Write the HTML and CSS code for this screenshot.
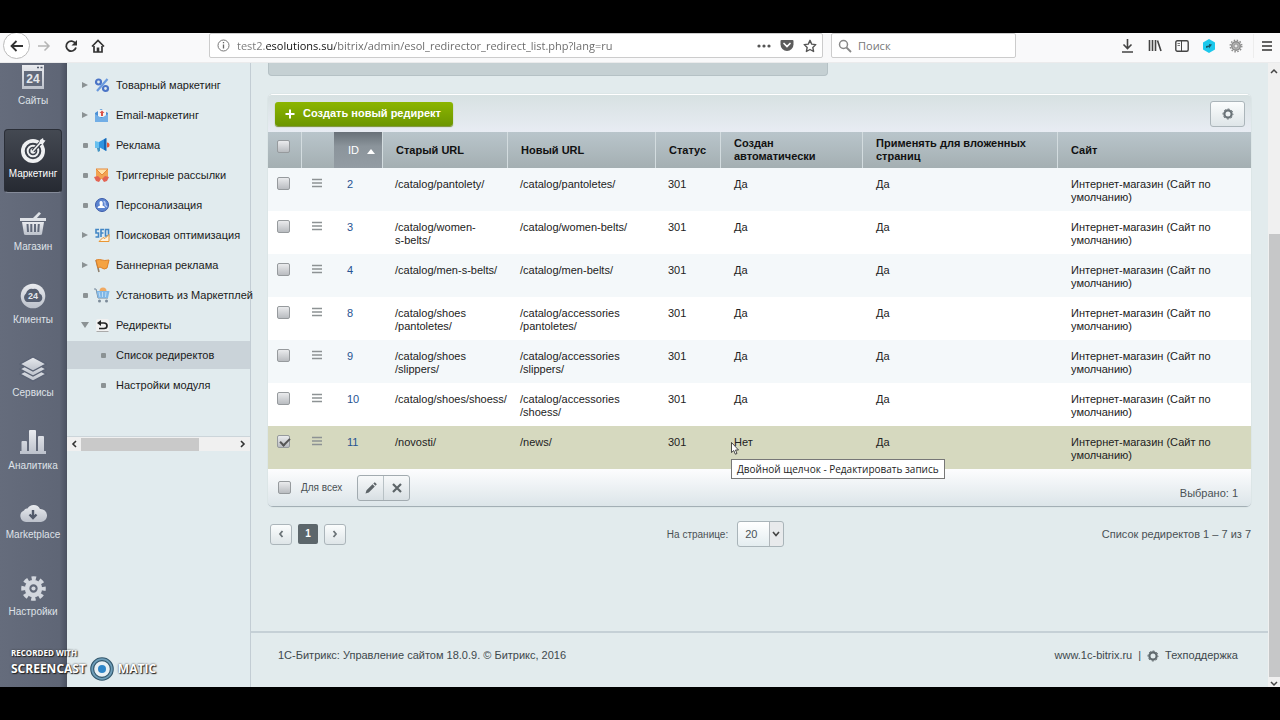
FILE: index.html
```html
<!DOCTYPE html>
<html lang="ru">
<head>
<meta charset="utf-8">
<title>Список редиректов</title>
<link rel="stylesheet" href="styles.css">
</head>
<body>
<svg class="defs" aria-hidden="true">
  <defs>
    <linearGradient id="metal" x1="0" y1="0" x2="0" y2="1"><stop offset="0" stop-color="#e9ebef"/><stop offset="1" stop-color="#bcc1cb"/></linearGradient>
    <symbol id="gear" viewBox="0 0 24 24"><circle cx="12" cy="12" r="6.2" fill="none" stroke="currentColor" stroke-width="4.4"/><circle cx="12" cy="12" r="9.8" fill="none" stroke="currentColor" stroke-width="4" stroke-dasharray="4.2 3.497" stroke-dashoffset="2.1"/><circle cx="12" cy="12" r="2" fill="currentColor"/></symbol>
    <symbol id="ring" viewBox="0 0 12 12"><circle cx="6" cy="6" r="3.6" fill="none" stroke="currentColor" stroke-width="2.2"/><circle cx="6" cy="6" r="5" fill="none" stroke="currentColor" stroke-width="1" stroke-dasharray="2 1.927" stroke-dashoffset="1"/></symbol>
    <symbol id="cog" viewBox="0 0 14 14"><circle cx="7" cy="7" r="4.300" fill="#b4b4b4" stroke="#8b8b8b" stroke-width="1.400"/><circle cx="7" cy="7" r="5.800" fill="none" stroke="#8b8b8b" stroke-width="1.400" stroke-dasharray="1.500 1.537"/><circle cx="7" cy="7" r="2" fill="#e8e8e8" stroke="#888" stroke-width=".8"/></symbol>
    <symbol id="bars" viewBox="0 0 12 10"><path d="M1 1.500h10M1 5h10M1 8.500h10" stroke="currentColor" stroke-width="1.300"/></symbol>
  </defs>
</svg>

<header class="browser">
  <button class="nav-back" aria-label="Назад"><svg width="16" height="14" viewBox="0 0 16 14"><path d="M14 7H3M7.500 2L2.500 7l5 5" fill="none" stroke="#333" stroke-width="1.800"/></svg></button>
  <button class="tool" aria-label="Вперёд"><svg width="14" height="12" viewBox="0 0 14 12"><path d="M1 6h11M7.500 1.500L12 6l-4.500 4.500" fill="none" stroke="#b5b5b5" stroke-width="1.500"/></svg></button>
  <button class="tool" aria-label="Обновить"><svg width="14" height="14" viewBox="0 0 14 14"><path d="M11.500 4.500A5 5 0 1 0 12 8.500" fill="none" stroke="#333" stroke-width="1.800"/><path d="M13 1v5.500H7.500z" fill="#333"/></svg></button>
  <button class="tool" aria-label="Домой"><svg width="14" height="14" viewBox="0 0 14 14"><path d="M1 7.500L7 1.500l6 6" fill="none" stroke="#333" stroke-width="1.700"/><path d="M3 7v6h8V7" fill="none" stroke="#333" stroke-width="1.700"/><path d="M5.700 8.500h2.600V13H5.700z" fill="#333"/></svg></button>
  <div class="url">
    <svg width="13" height="13" viewBox="0 0 13 13"><circle cx="6.500" cy="6.500" r="5.500" fill="none" stroke="#777"/><path d="M6.500 5.500v4M6.500 3v1.300" stroke="#666" stroke-width="1.300"/></svg>
    <input class="url-input" type="text" aria-label="Адрес" value="test2.esolutions.su/bitrix/admin/esol_redirector_redirect_list.php?lang=ru">
    <svg width="14" height="14" viewBox="0 0 14 14" fill="#555"><circle cx="2" cy="7" r="1.600"/><circle cx="7" cy="7" r="1.600"/><circle cx="12" cy="7" r="1.600"/></svg>
    <svg width="14" height="13" viewBox="0 0 14 13"><path d="M1.500 1h11q1 0 1 1v3.500a6.500 6.500 0 0 1-13 0V2q0-1 1-1z" fill="#5c5c5c"/><path d="M4 4.500l3 3 3-3" fill="none" stroke="#fff" stroke-width="1.700" stroke-linecap="round"/></svg>
    <svg width="14" height="14" viewBox="0 0 14 14"><path d="M7 1.300l1.700 3.800 4.100.5-3 2.800.8 4.100L7 10.500l-3.600 2 .8-4.100-3-2.800 4.100-.5z" fill="none" stroke="#555" stroke-width="1.400" stroke-linejoin="round"/></svg>
  </div>
  <div class="search">
    <svg width="14" height="14" viewBox="0 0 14 14"><circle cx="5.500" cy="5.500" r="4" fill="none" stroke="#888" stroke-width="1.500"/><path d="M8.500 8.500L13 13" stroke="#888" stroke-width="1.800"/></svg>
    <input type="text" aria-label="Поиск" placeholder="Поиск">
  </div>
  <div class="browser-tools">
    <button class="tool" aria-label="Загрузки"><svg width="13" height="14" viewBox="0 0 13 14"><path d="M6.500 0v9M2.500 5.500l4 4 4-4M1 13h11" fill="none" stroke="#444" stroke-width="1.600"/></svg></button>
    <button class="tool" aria-label="Библиотека"><svg width="14" height="13" viewBox="0 0 14 13"><path d="M1.500 1v11M4.500 1v11M7.500 1v11M9.500 1.500L13 12" fill="none" stroke="#444" stroke-width="1.600"/></svg></button>
    <button class="tool" aria-label="Боковая панель"><svg width="14" height="12" viewBox="0 0 14 12"><rect x=".8" y=".8" width="12.400" height="10.400" rx="1.500" fill="none" stroke="#444" stroke-width="1.400"/><path d="M6.500 1v10" stroke="#444"/><path d="M2.500 3.500h2.500M2.500 5.500h2.500" stroke="#777"/></svg></button>
    <button class="tool" aria-label="Дополнение"><svg width="14" height="14" viewBox="0 0 14 14"><path d="M7 0l6 3.500v7L7 14l-6-3.500v-7z" fill="#1cc8ec"/><path d="M4 9V7l3-.5V5l3 .5-3 4V8z" fill="#175768"/></svg></button>
    <button class="tool" aria-label="Расширение"><svg width="14" height="14"><use href="#cog"/></svg></button>
    <button class="tool tool-menu" aria-label="Меню"><svg width="12" height="12" viewBox="0 0 12 12"><path d="M1 2h10M1 6h10M1 10h10" stroke="#333" stroke-width="1.500"/></svg></button>
  </div>
</header>

<div class="workspace">
  <nav class="rail">
    <a class="rail-item" href="#"><span class="rail-icon"><svg width="26" height="26" viewBox="0 0 26 26"><path d="M2 1h22v24H2z" fill="url(#metal)"/><path d="M4 7h18v15H4z" fill="#626a7b"/><path d="M17 3.500h2M20.500 3.500h2" stroke="#525a6b" stroke-width="1.500"/><text x="13" y="19" class="icon-24" text-anchor="middle">24</text></svg></span>Сайты</a>
    <a class="rail-item is-active" href="#"><span class="rail-icon"><svg width="28" height="28" viewBox="0 0 28 28"><circle cx="14" cy="15" r="12" fill="#eff0f2"/><circle cx="14" cy="15" r="7.300" fill="none" stroke="#3c414b" stroke-width="2"/><circle cx="14" cy="15" r="3.500" fill="none" stroke="#3c414b" stroke-width="1.700"/><path d="M14 15L25 3" stroke="#3c414b" stroke-width="4"/><path d="M14 15L22 6" stroke="#eff0f2" stroke-width="1.700"/><path d="M20 8l1-4 3-2 .5 2 2 .5-2.500 3.500z" fill="#eff0f2"/></svg></span>Маркетинг</a>
    <a class="rail-item" href="#"><span class="rail-icon"><svg width="28" height="26" viewBox="0 0 28 26"><path d="M13 9l7-7 2 1.500L17 9z" fill="#dfe2e7"/><path d="M1 8h26v3H1z" fill="#dfe2e7"/><path d="M3 12h22l-2 12q0 1-2 1H7q-2 0-2-1z" fill="url(#metal)"/><path d="M8.500 14l.5 8M12.300 14v8M16 14v8M19.800 14l-.5 8" stroke="#626a7b" stroke-width="2"/></svg></span>Магазин</a>
    <a class="rail-item" href="#"><span class="rail-icon"><svg width="26" height="26" viewBox="0 0 26 26"><circle cx="13" cy="13" r="12.300" fill="url(#metal)"/><path d="M7 19a5 5 0 0 1-1-8.500Q8 5 13 6q5-1 6.500 4.500A4.500 4.500 0 0 1 19 19z" fill="#555e70"/><text x="13" y="16" class="icon-24 icon-24-small" text-anchor="middle">24</text></svg></span>Клиенты</a>
    <a class="rail-item" href="#"><span class="rail-icon"><svg width="28" height="26" viewBox="0 0 28 26"><g fill="url(#metal)" stroke="#596173" stroke-width="1.300"><path d="M1 18l13-7 13 7-13 7z"/><path d="M1 13l13-7 13 7-13 7z"/><path d="M1 8l13-7 13 7-13 7z"/></g></svg></span>Сервисы</a>
    <a class="rail-item" href="#"><span class="rail-icon"><svg width="28" height="28" viewBox="0 0 28 28"><path d="M1 26V23h1.500V14q0-1 1-1H7q1 0 1 1v9h2V3q0-1 1-1h5q1 0 1 1v20h2V9q0-1 1-1h4q1 0 1 1v14h2v3z" fill="url(#metal)"/></svg></span>Аналитика</a>
    <a class="rail-item is-compact" href="#"><span class="rail-icon"><svg width="28" height="20" viewBox="0 0 28 20"><path d="M7 19A6 6 0 0 1 5 7.500Q6 5 8.500 5.500A7 7 0 0 1 21 6a6.500 6.500 0 0 1 1 13z" fill="url(#metal)"/><path d="M14 7v7M10.500 11.500L14 15l3.500-3.500" fill="none" stroke="#525a6b" stroke-width="2.400"/></svg></span>Marketplace</a>
    <a class="rail-item" href="#"><span class="rail-icon"><svg width="25" height="25"><use href="#gear"/></svg></span>Настройки</a>
  </nav>

  <aside class="menu">
    <ul class="menu-list">
      <li><a class="menu-item" href="#"><i class="arrow"></i><svg width="16" height="16" viewBox="0 0 16 16"><g fill="none" stroke="#4b74c6" stroke-width="2.200"><circle cx="4.500" cy="5" r="2.500"/><circle cx="11.500" cy="11.500" r="2.500"/><path d="M13.500 2L3 14" stroke="#6b9ade"/></g></svg>Товарный маркетинг</a></li>
      <li><a class="menu-item" href="#"><i class="arrow"></i><svg width="16" height="16" viewBox="0 0 16 16"><path d="M1 6l6-4 7 4v9H1z" fill="#4b8fd4"/><path d="M4 3h8v7H4z" fill="#f4f2f2"/><path d="M8 3.500L5.500 6H7v3h2V6h1.500z" fill="#d9534a"/><path d="M1 7l6.500 4L14 7v8H1z" fill="#72aee6"/></svg>Email-маркетинг</a></li>
      <li><a class="menu-item" href="#"><i class="dot"></i><svg width="16" height="16" viewBox="0 0 16 16"><path d="M2 8h4v6l-2 1z" fill="#4796c4"/><path d="M1 4l4 1v6H1z" fill="#68c0ee"/><path d="M5 5l7-4v13l-7-4z" fill="#2f92e0"/><path d="M10 2.500l2.500-1.500v13L10 12.500z" fill="#1766b4"/><path d="M13 5.500a2.500 2.500 0 0 1 0 5z" fill="#ec5836"/></svg>Реклама</a></li>
      <li><a class="menu-item" href="#"><i class="dot"></i><svg width="16" height="16" viewBox="0 0 16 16"><path d="M2 2h12v10H2z" fill="#f2a452"/><path d="M2 2l6 6 6-6z" fill="#ffe2aa" stroke="#e5883b"/><path d="M0 10l4-1 3 3-2 3-3-1zM15 10l-4-1-3 3 2 3 3-1z" fill="#e36454"/></svg>Триггерные рассылки</a></li>
      <li><a class="menu-item" href="#"><i class="dot"></i><svg width="16" height="16" viewBox="0 0 16 16"><circle cx="8" cy="8" r="6.500" fill="#5b84d0" stroke="#3b5baa"/><path d="M3.500 11q0-2 2.500-2.500Q4.500 4 7 4t1.500 4.500q2.500.5 2.500 2.500z" fill="#fff"/><path d="M9.500 4.500q2 0 1.500 3.500l2 2" fill="none" stroke="#b5c8f2" stroke-width="1.300"/></svg>Персонализация</a></li>
      <li><a class="menu-item" href="#"><i class="arrow"></i><svg width="16" height="16" viewBox="0 0 16 16"><path d="M5 2.500H2v3.500h2.500v4H1.500M10 2.500H7v7.500M7 6h2.500M11.500 2.500h3V9h-3z" fill="none" stroke="#4387c5" stroke-width="1.600"/><path d="M5 14.500l4-4 2 1 4-4v7z" fill="#fff2dc" stroke="#e99634"/></svg>Поисковая оптимизация</a></li>
      <li><a class="menu-item" href="#"><i class="arrow"></i><svg width="16" height="16" viewBox="0 0 16 16"><path d="M2 3l3 12" stroke="#8d7e6c" stroke-width="1.500"/><path d="M2 3q4-1 6 0t7 0l-2 8q-3 2-5 0t-4 0z" fill="#f5a343" stroke="#df8127"/></svg>Баннерная реклама</a></li>
      <li><a class="menu-item" href="#"><i class="dot"></i><svg width="16" height="16" viewBox="0 0 16 16"><circle cx="9" cy="4" r="3.500" fill="#f0a961"/><path d="M0 2h2l2 9h10" fill="none" stroke="#75879a"/><path d="M2.500 4h13L14 11H4z" fill="#80b7e6"/><path d="M5 5l1 5M8.500 5v5M12 5l-.5 5" stroke="#bedcf5"/><circle cx="5.500" cy="14" r="1.500" fill="#7c8b99"/><circle cx="12.500" cy="14" r="1.500" fill="#7c8b99"/></svg>Установить из Маркетплей</a></li>
      <li><a class="menu-item" href="#"><i class="arrow is-open"></i><svg width="16" height="16" viewBox="0 0 16 16"><rect x="2" y="2" width="13" height="13" rx="2" fill="#f1f1f1"/><path d="M2.500 14.500h12" stroke="#aaa"/><path d="M5 6h5q3 0 3 2.700T10 11.500H5" fill="none" stroke="#222" stroke-width="1.700"/><path d="M7 3v6L3 6z" fill="#222"/></svg>Редиректы</a></li>
      <li><a class="menu-item is-child is-selected" href="#"><i class="dot"></i>Список редиректов</a></li>
      <li><a class="menu-item is-child" href="#"><i class="dot"></i>Настройки модуля</a></li>
    </ul>
    <div class="hscroll">
      <svg width="6" height="8" viewBox="0 0 6 8"><path d="M5 1L2 4l3 3" fill="none" stroke="#333" stroke-width="1.600"/></svg>
      <div class="hscroll-track"><div class="hscroll-thumb"></div></div>
      <svg width="6" height="8" viewBox="0 0 6 8"><path d="M1 1l3 3-3 3" fill="none" stroke="#333" stroke-width="1.600"/></svg>
    </div>
  </aside>

  <div class="page">
    <main class="content">
      <div class="filter-edge"></div>
      <section class="grid-panel">
        <div class="grid-toolbar">
          <button class="create"><svg width="10" height="10" viewBox="0 0 10 10"><path d="M5 .5v9M.5 5h9" stroke="#fff" stroke-width="2"/></svg>Создать новый редирект</button>
          <button class="btn settings" aria-label="Настроить"><svg width="12" height="12"><use href="#ring"/></svg></button>
        </div>
        <table class="grid">
          <colgroup><col class="c-check"><col class="c-check"><col class="c-id"><col class="c-old"><col class="c-new"><col class="c-status"><col class="c-auto"><col class="c-nested"><col></colgroup>
          <thead>
            <tr><th><input type="checkbox" aria-label="Выбрать все"></th><th></th><th class="sorted">ID <i class="sort-up"></i></th><th>Старый URL</th><th>Новый URL</th><th>Статус</th><th>Создан автоматически</th><th>Применять для вложенных страниц</th><th>Сайт</th></tr>
          </thead>
          <tbody>
            <tr><td><input type="checkbox" aria-label="Выбрать 2"></td><td><button class="row-menu" aria-label="Действия"><svg width="12" height="10"><use href="#bars"/></svg></button></td><td><a href="#">2</a></td><td>/catalog/pantolety/</td><td>/catalog/pantoletes/</td><td>301</td><td>Да</td><td>Да</td><td>Интернет-магазин (Сайт по умолчанию)</td></tr>
            <tr><td><input type="checkbox" aria-label="Выбрать 3"></td><td><button class="row-menu" aria-label="Действия"><svg width="12" height="10"><use href="#bars"/></svg></button></td><td><a href="#">3</a></td><td>/catalog/women-<br>s-belts/</td><td>/catalog/women-belts/</td><td>301</td><td>Да</td><td>Да</td><td>Интернет-магазин (Сайт по умолчанию)</td></tr>
            <tr><td><input type="checkbox" aria-label="Выбрать 4"></td><td><button class="row-menu" aria-label="Действия"><svg width="12" height="10"><use href="#bars"/></svg></button></td><td><a href="#">4</a></td><td>/catalog/men-s-belts/</td><td>/catalog/men-belts/</td><td>301</td><td>Да</td><td>Да</td><td>Интернет-магазин (Сайт по умолчанию)</td></tr>
            <tr><td><input type="checkbox" aria-label="Выбрать 8"></td><td><button class="row-menu" aria-label="Действия"><svg width="12" height="10"><use href="#bars"/></svg></button></td><td><a href="#">8</a></td><td>/catalog/shoes<br>/pantoletes/</td><td>/catalog/accessories<br>/pantoletes/</td><td>301</td><td>Да</td><td>Да</td><td>Интернет-магазин (Сайт по умолчанию)</td></tr>
            <tr><td><input type="checkbox" aria-label="Выбрать 9"></td><td><button class="row-menu" aria-label="Действия"><svg width="12" height="10"><use href="#bars"/></svg></button></td><td><a href="#">9</a></td><td>/catalog/shoes<br>/slippers/</td><td>/catalog/accessories<br>/slippers/</td><td>301</td><td>Да</td><td>Да</td><td>Интернет-магазин (Сайт по умолчанию)</td></tr>
            <tr><td><input type="checkbox" aria-label="Выбрать 10"></td><td><button class="row-menu" aria-label="Действия"><svg width="12" height="10"><use href="#bars"/></svg></button></td><td><a href="#">10</a></td><td class="nowrap">/catalog/shoes/shoess/</td><td>/catalog/accessories<br>/shoess/</td><td>301</td><td>Да</td><td>Да</td><td>Интернет-магазин (Сайт по умолчанию)</td></tr>
            <tr class="is-checked"><td><input type="checkbox" aria-label="Выбрать 11" checked></td><td><button class="row-menu" aria-label="Действия"><svg width="12" height="10"><use href="#bars"/></svg></button></td><td><a href="#">11</a></td><td>/novosti/</td><td>/news/</td><td>301</td><td class="hovered">Нет<svg class="cursor" width="8" height="13" viewBox="0 0 8 13"><path d="M.5.500v10l2.300-2 1.500 3.700 1.700-.7-1.500-3.500h3z" fill="#fff" stroke="#222" stroke-width=".8"/></svg><span class="tooltip" role="tooltip">Двойной щелчок - Редактировать запись</span></td><td>Да</td><td>Интернет-магазин (Сайт по умолчанию)</td></tr>
          </tbody>
        </table>
        <div class="grid-footer">
          <label class="for-all"><input type="checkbox">Для всех</label>
          <div class="actions">
            <button aria-label="Редактировать"><svg width="14" height="14" viewBox="0 0 14 14"><path d="M1.500 12.500l1-3.300 6-6 2.300 2.300-6 6zM9.300 2.500l1.500-1.300 2 2-1.300 1.500z" fill="#5d6468"/></svg></button>
            <button aria-label="Удалить"><svg width="12" height="12" viewBox="0 0 12 12"><path d="M2 2l8 8M10 2l-8 8" stroke="#5d6468" stroke-width="2.200"/></svg></button>
          </div>
          <span class="selected-count">Выбрано: 1</span>
        </div>
      </section>
      <div class="pager">
        <div class="pages">
          <button class="btn" aria-label="Предыдущая"><svg width="6" height="8" viewBox="0 0 6 8"><path d="M4.500 1L2 4l2.500 3" fill="none" stroke="#6b7377" stroke-width="1.800"/></svg></button>
          <span class="current">1</span>
          <button class="btn" aria-label="Следующая"><svg width="6" height="8" viewBox="0 0 6 8"><path d="M1.500 1L4 4 1.500 7" fill="none" stroke="#6b7377" stroke-width="1.800"/></svg></button>
        </div>
        <div class="per-page">
          <label for="per-page">На странице:</label>
          <span class="select-box"><select id="per-page"><option>20</option></select><svg width="8" height="6" viewBox="0 0 8 6"><path d="M1 1l3 3.500L7 1" fill="none" stroke="#444" stroke-width="1.600"/></svg></span>
        </div>
        <span class="range">Список редиректов 1 – 7 из 7</span>
      </div>
    </main>
    <footer class="footer">
      <span>1С-Битрикс: Управление сайтом 18.0.9. © Битрикс, 2016</span>
      <span class="footer-links"><a href="#">www.1c-bitrix.ru</a><span>|</span><svg width="12" height="12"><use href="#ring"/></svg><a href="#">Техподдержка</a></span>
    </footer>
  </div>

  <div class="vscroll">
    <svg width="8" height="6" viewBox="0 0 8 6"><path d="M1 5l3-3 3 3" fill="none" stroke="#444" stroke-width="1.500"/></svg>
    <div class="vscroll-track"><div class="vscroll-thumb"></div></div>
    <svg width="8" height="6" viewBox="0 0 8 6"><path d="M1 1l3 3 3-3" fill="none" stroke="#444" stroke-width="1.500"/></svg>
  </div>

  <div class="watermark">
    <span class="wm-top">RECORDED WITH</span>
    <span class="wm-name">SCREENCAST<svg width="24" height="24" viewBox="0 0 24 24"><circle cx="12" cy="12" r="9.800" fill="#e8f0f4" stroke="#31566b" stroke-width="4"/><circle cx="12" cy="12" r="9.800" fill="none" stroke="#6e9db8" stroke-width="1.800"/><circle cx="12" cy="12" r="4" fill="#2f86c8"/></svg>MATIC</span>
  </div>
</div>
</body>
</html>
```
FILE: styles.css
```css
* { box-sizing: border-box; }

body {
  margin: 0;
  min-height: 100vh;
  padding: 33px 0;
  display: flex;
  flex-direction: column;
  background: #000;
  font: 11px/13px "Liberation Sans", Arial, sans-serif;
  color: #222;
}

a { color: inherit; text-decoration: none; }
svg { display: block; flex: none; }
button, input, select { font: inherit; color: inherit; margin: 0; }
button { display: flex; align-items: center; justify-content: center; padding: 0; border: 0; background: none; }
.defs { position: absolute; width: 0; height: 0; }

/* Browser toolbar */
.browser {
  display: flex;
  align-items: center;
  height: 30px;
  padding: 0 0 4px 3px;
  background: #f9f9fa;
  border-bottom: 1px solid #ebebec;
  overflow: hidden;
  font: 11px/14px "Open Sans", "Noto Sans", sans-serif;
}
.nav-back { width: 27px; height: 27px; flex: none; border: 1px solid #bbb; border-radius: 50%; background: #fff; }
.tool { width: 27px; height: 24px; flex: none; }
.url, .search {
  display: flex;
  align-items: center;
  height: 25px;
  border: 1px solid #ccc;
  border-radius: 2px;
  background: #fff;
}
.url { flex: 600; margin-left: 98px; padding: 0 5px 0 7px; gap: 9px; }
.url-input { margin-left: -2px; }
.search { flex: 171; margin-left: 8px; padding: 0 6px; gap: 6px; }
.url input, .search input { flex: 1; min-width: 0; padding: 0; border: 0; outline: 0; background: none; }
.url .url-input {
  color: transparent;
  background: linear-gradient(90deg, #777 29px, #111 29px, #111 98px, #666 98px);
  background-clip: text;
  -webkit-background-clip: text;
}
.search input::placeholder { color: #777; opacity: 1; }
.browser-tools { display: flex; margin-left: 98px; }
.tool-menu { margin-left: 4px; border-left: 1px solid #ededed; }

/* Admin layout */
.workspace { position: relative; flex: 1; display: flex; min-height: 624px; background: #e2ebed; }

.rail {
  width: 67px;
  flex: none;
  display: flex;
  flex-direction: column;
  gap: 9px;
  padding: 0 4px;
  overflow: hidden;
  background: linear-gradient(90deg, #656c7c, #5f6676 90%, #4d5464);
  border-right: 1px solid #4c5260;
  color: #dfe2e8;
  font-size: 10px;
}
.rail-item { display: flex; flex-direction: column; align-items: center; height: 64px; padding-top: 3px; border: 1px solid transparent; border-radius: 4px; white-space: nowrap; }
.rail-item:first-child { margin-top: -7px; }
.rail-icon { display: flex; align-items: center; justify-content: center; height: 34px; color: #d3d7de; }
.rail-item.is-active { background: linear-gradient(#444952, #262a32); border-color: #2a2e37; border-bottom-color: #858b99; color: #fff; }
.is-compact .rail-icon { height: 30px; }
.icon-24 { font: bold 12px "Liberation Sans", sans-serif; fill: #e4e7ec; }
.icon-24-small { font-size: 9px; }

.menu { width: 184px; flex: none; border-right: 1px solid #c3cdd4; background: #e1ebee; }
.menu-list { margin: 0; padding: 7px 0 0; list-style: none; }
.menu-item { display: flex; align-items: center; height: 30px; padding-left: 14px; gap: 5px; color: #1b1b1b; white-space: nowrap; border: solid transparent; border-width: 1px 0; background-clip: padding-box; }
.menu-item svg { margin-right: 1px; }
.is-child { padding-left: 32px; gap: 9px; }
.is-selected { background-color: #cad3d9; }
.arrow, .dot { width: 8px; height: 8px; flex: none; display: flex; align-items: center; justify-content: center; }
.arrow::before { content: ""; border: solid transparent; border-width: 3px 0 3px 6px; border-left-color: #8b9294; }
.arrow.is-open::before { border-width: 6px 4px 0; border-color: #8b9294 transparent transparent; }
.dot::before { content: ""; width: 5px; height: 5px; border-radius: 1px; background: #8b9294; }

.hscroll { display: flex; align-items: center; gap: 4px; height: 15px; margin-top: 36px; padding: 0 4px; background: #f0f0f0; border-top: 1px solid #ccd5da; }
.hscroll-track { flex: 1; height: 13px; }
.hscroll-thumb { width: 76%; height: 13px; background: #c9c9c9; }

/* Page content */
.page { flex: 1; min-width: 0; display: flex; flex-direction: column; }
.content { flex: 1; padding: 0 17px; }
.filter-edge { width: 57%; height: 13px; border: 1px solid #b5c1c5; border-top: 0; border-radius: 0 0 4px 4px; background: #c5d0d3; }

.grid-panel { margin-top: 18px; border: solid #a3afb5; border-width: 1px 0; border-top-color: #fff; border-radius: 5px; box-shadow: 0 0 1px #a9b4ba; }
.grid-toolbar { display: flex; align-items: center; justify-content: space-between; height: 37px; padding: 0 6px 0 7px; border-radius: 4px 4px 0 0; background: linear-gradient(#d7e1e2, #e8ecf3); }
.create { height: 24px; gap: 8px; padding: 0 12px 0 10px; border-radius: 3px; background: linear-gradient(#8cb500, #6c9600); box-shadow: 0 1px 1px #789030; color: #fff; font-weight: bold; }
.btn { border: 1px solid #abb5ba; border-radius: 3px; background: linear-gradient(#fbfdfd, #dee5e8); }
.settings { width: 35px; height: 26px; color: #697277; }

input[type="checkbox"] { appearance: none; display: block; width: 13px; height: 13px; flex: none; border: 1px solid #969a9d; border-radius: 2px; background: linear-gradient(#eaebed, #b9bcc0); }
input[type="checkbox"]:checked::after { content: ""; display: block; width: 4px; height: 8px; margin: 0 0 0 4px; border: solid #555; border-width: 0 2px 2px 0; transform: rotate(45deg); }

.grid { width: 100%; table-layout: fixed; border-collapse: separate; border-spacing: 0; }
.c-check { width: 33px; }
.c-id { width: 48px; }
.c-old { width: 125px; }
.c-new { width: 148px; }
.c-status { width: 65px; }
.c-auto { width: 142px; }
.c-nested { width: 195px; }
.grid th { height: 36px; padding: 0 12px 0 13px; text-align: left; color: #111; border-left: 1px solid #d3dcdf; background: linear-gradient(#b9c5cb, #a4afb2); }
.grid th:first-child { padding: 0 9px 8px; border-left: 0; }
.grid th.sorted { padding: 0 0 0 14px; border-left: 0; white-space: nowrap; color: #fff; font-weight: normal; background: linear-gradient(#687078, #8b949b 40%, #939ca3); }
.sort-up { display: inline-block; margin-left: 5px; border: solid transparent; border-width: 0 4px 5px; border-bottom-color: #fff; }
.grid td { height: 43px; padding: 10px 0 0 13px; vertical-align: top; }
.grid td:nth-child(n+7) { padding-left: 14px; }
.grid td:first-child { padding-left: 9px; padding-top: 9px; }
.grid td:nth-child(2) { padding-left: 10px; }
.grid tbody tr { background: #fff; }
.grid tbody tr:nth-child(odd) { background: #f4f8fa; }
.grid tbody tr.is-checked { background: #d6d9bf; }
.grid td a { color: #275391; }
.row-menu { color: #8d9294; }
.nowrap { white-space: nowrap; }

.hovered { position: relative; }
.cursor { position: absolute; left: 11px; top: 16px; z-index: 2; }
.tooltip { position: absolute; left: 11px; top: 33px; padding: 2px 5px; border: 1px solid #777; background: #fff; color: #222; font: 10px/14px "Open Sans", "Noto Sans", sans-serif; white-space: nowrap; }

.grid-footer { display: flex; align-items: center; height: 37px; padding: 0 13px 0 10px; border-radius: 0 0 4px 4px; background: linear-gradient(#fdfdfe, #dce5e9); color: #4a5155; }
.for-all { display: flex; align-items: center; gap: 10px; font-size: 10px; }
.actions { display: flex; height: 26px; margin-left: 15px; border: 1px solid #a2abb0; border-radius: 3px; background: linear-gradient(#f7f9fa, #d8dfe3); }
.actions button { width: 25px; }
.actions button + button { width: 26px; border-left: 1px solid #b8c1c5; }
.selected-count { margin-left: auto; padding-top: 11px; }

.pager { display: grid; grid-template-columns: 399fr auto 467fr; align-items: center; height: 26px; margin-top: 14px; color: #4a5155; }
.pages { display: flex; gap: 6px; padding-left: 2px; }
.pages .btn { width: 22px; height: 21px; }
.current { width: 20px; height: 20px; border-radius: 2px; background: #5c666b; color: #fff; font-size: 10px; font-weight: bold; line-height: 20px; text-align: center; }
.per-page { display: flex; align-items: center; gap: 9px; font-size: 10px; }
.select-box { position: relative; display: block; }
.select-box select { appearance: none; display: block; width: 47px; height: 26px; padding: 0 0 0 7px; border: 1px solid #a9b4b9; border-radius: 3px; background: linear-gradient(90deg, transparent 31px, #b0b6ba 31px, #b0b6ba 32px, #e8eaec 32px), linear-gradient(#fff, #e4edf0); font-size: 11px; }
.select-box svg { position: absolute; right: 4px; top: 10px; pointer-events: none; }
.range { justify-self: end; white-space: nowrap; }

.footer { display: flex; align-items: center; justify-content: space-between; height: 56px; padding: 0 30px 9px 27px; border-top: 2px solid #c5d0d6; color: #40484c; }
.footer-links { display: flex; align-items: center; gap: 6px; }
.footer-links svg { color: #5f686c; }

.vscroll { width: 12px; flex: none; display: flex; flex-direction: column; align-items: center; padding: 5px 0 0; background: #f0f0f0; }
.vscroll-track { width: 100%; flex: 1; padding: 160px 0 4px 1px; }
.vscroll-thumb { height: 100%; background: #c6c7c8; }

/* Recorder watermark */
.watermark { position: absolute; left: 11px; bottom: 6px; display: flex; flex-direction: column; color: #fff; font-family: "Open Sans", "Noto Sans", sans-serif; font-weight: 700; text-shadow: 1px 1px 1px #222, 0 0 2px #333; }
.wm-top { font-size: 8px; line-height: 8px; }
.wm-name { display: flex; align-items: center; gap: 4px; font-size: 12px; line-height: 24px; }
```
